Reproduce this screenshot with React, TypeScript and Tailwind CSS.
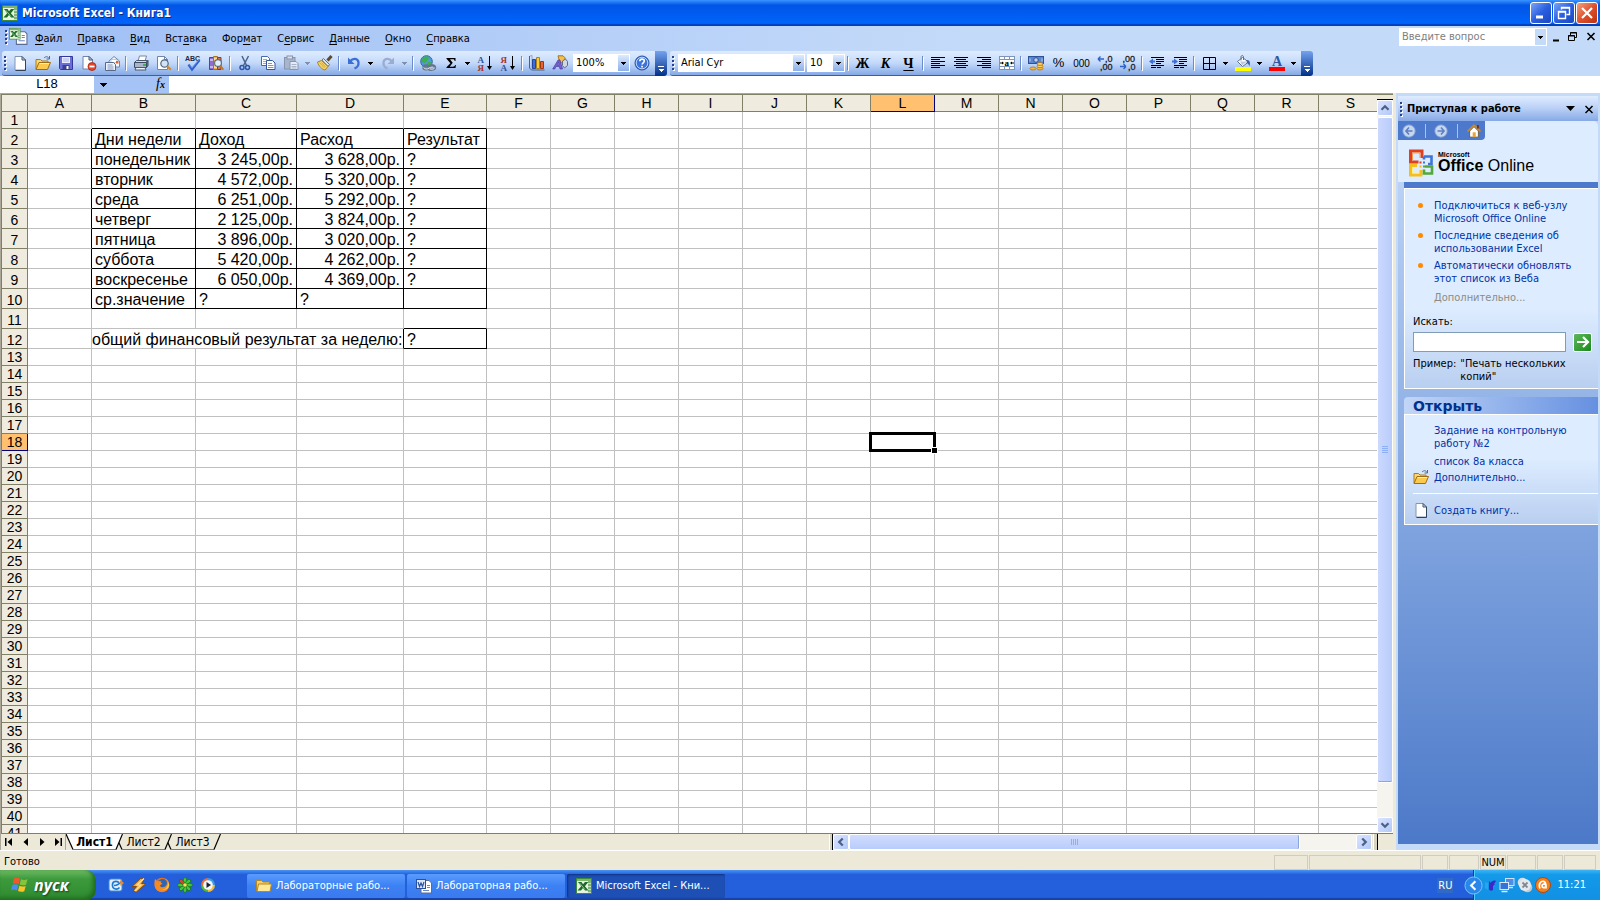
import React from "react";

const ui = "font-['DejaVu_Sans_Condensed','DejaVu_Sans',sans-serif]";

/* ---------- icons ---------- */

type SvgProps = { children: React.ReactNode; size?: string; box?: string };

function Svg({ children, size = "size-4", box = "0 0 16 16" }: SvgProps) {
  return (
    <svg viewBox={box} className={`${size} shrink-0`} fill="none" aria-hidden="true">
      {children}
    </svg>
  );
}

function Down({ color = "#000" }: { color?: string }) {
  return (
    <svg viewBox="0 0 5 3" className="h-[3px] w-[5px]" aria-hidden="true" shapeRendering="crispEdges">
      <path d="M0 0h5v1H4v1H3v1H2V2H1V1H0z" fill={color} />
    </svg>
  );
}

const Page = () => (
  <>
    <path d="M3 1.500h7l3.500 3.500v10H3z" fill="#fff" stroke="#8296b4" />
    <path d="M13.500 5v10.500H3.500" stroke="#33435c" />
    <path d="M10 1.500V5h3.500z" fill="#c9d6ea" stroke="#45566f" />
  </>
);

const FolderOpen = () => (
  <>
    <path d="M1 14V4.500h4.500l1.500 1.500h6V8" fill="#f7d774" stroke="#b07a1d" />
    <path d="M1 14.500l3-7h11.500l-3 7z" fill="#fbc94c" stroke="#a06c14" />
    <path d="M4.800 8.500h9.300" stroke="#fff2b5" />
    <path d="M9 3c2-2 4-1.500 5 .5M14.500 1v3h-3" stroke="#4b6a8c" />
  </>
);

const ExcelArt = () => (
  <>
    <rect x="0.500" y="0.500" width="15" height="15" fill="#e8f4e0" stroke="#3c8a3c" />
    <path d="M12 1h3v14h-3z" fill="#c3dfb9" />
    <path d="M12 4h3M12 7h3M12 10h3M12 13h3" stroke="#3c8a3c" />
    <path d="M1 1h14v2H1z" fill="#7db46e" />
    <path d="M2 4h3.500l1.500 2.300L9 4h3.300L8.900 8.200 12.500 12.500H9L7 10l-2 2.500H1.500l3.700-4.300z" fill="#1d6b2a" />
    <path d="M3.500 5l5.500 6.500" stroke="#8cc48a" />
  </>
);

const icons = {
  page: <Page />,
  open: <FolderOpen />,
  save: (
    <>
      <path d="M1.500 1.500h13v13h-12l-1-1z" fill="#6a6fd8" stroke="#34389c" />
      <rect x="4" y="2" width="8" height="6" fill="#e9edff" />
      <path d="M5 4h6M5 6h6" stroke="#a9b2e6" />
      <rect x="4.500" y="10" width="7" height="4.500" fill="#3b3f8f" />
      <rect x="8.500" y="11" width="2" height="3" fill="#fff" />
    </>
  ),
  permission: (
    <>
      <path d="M2 1.500h6l3.500 3.500v9H2z" fill="#fff" stroke="#6f84a8" />
      <path d="M8 1.500V5h3.500z" fill="#c9d6ea" stroke="#45566f" />
      <circle cx="11" cy="11.500" r="4" fill="#e2492c" stroke="#a32413" strokeWidth="0.800" />
      <path d="M8.500 11.500h5" stroke="#fff" strokeWidth="1.800" />
    </>
  ),
  email: (
    <>
      <path d="M5 6l5-4.500L15.500 6v6H5z" fill="#f3f6fb" stroke="#7287a8" />
      <path d="M7 4.500h6v3H7z" fill="#fff" stroke="#9aabc6" strokeWidth="0.600" />
      <rect x="12" y="6" width="2.500" height="2.500" fill="#e2632c" />
      <path d="M1.500 7.500h8l2 2v6h-10z" fill="#eef3fb" stroke="#55698b" />
      <path d="M3.500 10h5M3.500 12h6M3.500 14h6" stroke="#8195b6" />
    </>
  ),
  print: (
    <>
      <path d="M5 6l1.500-5h7L12 6z" fill="#fff" stroke="#7488a6" />
      <path d="M1.500 7.500l2-2h11l-1.500 2z" fill="#d5dce8" stroke="#4c5a70" />
      <path d="M1.500 7.500h12v5h-12z" fill="#a9b6ca" stroke="#3d4b60" />
      <path d="M13.500 7.500l1.500-2v5l-1.500 2z" fill="#6e7f99" stroke="#3d4b60" />
      <path d="M3 12.500h9l1 2.500H2z" fill="#eef2f8" stroke="#4c5a70" />
      <rect x="10" y="9" width="3" height="2" fill="#36b84a" />
    </>
  ),
  preview: (
    <>
      <path d="M1.500 1.500h7l3 3v10h-10z" fill="#fff" stroke="#6f84a8" />
      <path d="M8.500 1.500v3h3" stroke="#6f84a8" />
      <circle cx="8.500" cy="8.500" r="3.700" fill="#cfe5f7" stroke="#54677f" strokeWidth="1.200" />
      <path d="M11.200 11.200l3.600 3.600" stroke="#d28a2b" strokeWidth="2.200" />
    </>
  ),
  spell: (
    <>
      <text x="0" y="6" fontSize="7" fontWeight="700" fill="#1b2a4d" fontFamily="Liberation Sans">
        ABC
      </text>
      <path d="M3.500 9.500l3.500 5L14.500 5" stroke="#2f62cf" strokeWidth="2.400" />
      <path d="M4.500 9.500l2.500 3.300L13.500 5.200" stroke="#7fa8f2" strokeWidth="0.800" />
    </>
  ),
  research: (
    <>
      <path d="M1.500 2.500h4v12h-4z" fill="#8e6fd0" stroke="#5b3f9c" />
      <path d="M5.500 1.500h4v13h-4z" fill="#f0b84a" stroke="#a8741b" />
      <path d="M9.500 2.500h3.500v12H9.500z" fill="#d8705a" stroke="#8f3a2a" />
      <path d="M2 5h3M6 4h3M6 12h3M2 12h3" stroke="#fff" />
      <circle cx="10" cy="8" r="3.400" fill="#e2f0fb" stroke="#5a6b80" strokeWidth="1.100" />
      <path d="M12.300 10.500l3 4.300" stroke="#c07c20" strokeWidth="2" />
    </>
  ),
  cut: (
    <>
      <path d="M11.500 1L6.500 10.500M5 1l4.500 9.500" stroke="#4a648c" strokeWidth="1.500" />
      <circle cx="5" cy="12.500" r="2" stroke="#2c55a8" strokeWidth="1.500" />
      <circle cx="10.500" cy="12.500" r="2" stroke="#2c55a8" strokeWidth="1.500" />
    </>
  ),
  copy: (
    <>
      <path d="M1.500 1.500h6l2 2v7h-8z" fill="#fff" stroke="#4669b0" />
      <path d="M3 4.500h4M3 6.500h5M3 8.500h5" stroke="#8fabdd" />
      <path d="M6.500 5.500h6l2.500 2.500v6.500H6.500z" fill="#fff" stroke="#33569e" />
      <path d="M8 8.500h4M8 10.500h5.500M8 12.500h5.500" stroke="#7695d2" />
    </>
  ),
  paste: (
    <>
      <rect x="1.500" y="2.500" width="10.500" height="11.500" fill="#a8b6cd" stroke="#8794ad" />
      <rect x="4" y="1" width="5.500" height="3" fill="#d9e0ec" stroke="#8794ad" />
      <path d="M7 6.500h6l2 2v6H7z" fill="#e6ecf6" stroke="#8794ad" />
      <path d="M8.500 9.500h5M8.500 11.500h5M8.500 13h5" stroke="#a7b3c8" />
    </>
  ),
  brush: (
    <>
      <path d="M14.500 1l-4 4.500" stroke="#5c4a2c" strokeWidth="3" />
      <path d="M6.500 3.500l6 6-1.500 2L4.800 5z" fill="#dfe4ea" stroke="#6a6f78" />
      <path d="M4.500 5.500l6.500 6-3 3.500C5 14.500 1.500 11 .500 7z" fill="#f5d56a" stroke="#a88322" />
      <path d="M2.500 7.500l5 5.500M4.500 7.500l4 4.500" stroke="#c99f33" strokeWidth="0.800" />
    </>
  ),
  undo: (
    <>
      <path d="M4 6.500c3-4 8-3.500 8.500 1 .3 3-1.500 5-4 6" stroke="#3c6fd6" strokeWidth="2.300" />
      <path d="M2 2.500v6.500h6.500z" fill="#3c6fd6" />
    </>
  ),
  redo: (
    <>
      <path d="M12 6.500c-3-4-8-3.500-8.500 1-.3 3 1.500 5 4 6" stroke="#9aacd0" strokeWidth="2.300" />
      <path d="M14 2.500v6.500H7.500z" fill="#9aacd0" />
    </>
  ),
  link: (
    <>
      <circle cx="6.500" cy="6.500" r="5.800" fill="#4f9be0" stroke="#2c6a9e" />
      <path d="M3 2.500c2-1.500 5-1 6 .5-.5 2-2 1.500-2.500 3.500S3 8 1.500 6.500zM8 7c2-.5 3 .5 3.500 1.500-1 2-2 3-4 3.500C6.500 10 7 8 8 7z" fill="#3fb04a" />
      <path d="M3.500 12.500c0-2.500 4.500-2.500 5.500-1M8.500 13.800c1.500 1.500 6.500 1 6.500-1.300s-3.500-3-5.500-1.500" stroke="#66768a" strokeWidth="2.400" />
      <path d="M3.500 12.500c0 2.200 4.500 2.500 6 .5" stroke="#66768a" strokeWidth="2.400" />
      <path d="M3.800 12.500c0 1.800 4 2 5.500.5M9.500 13.800c2 1 5.200.3 5.200-1.300" stroke="#dfe5ec" strokeWidth="1" />
    </>
  ),
  sigma: (
    <path d="M3.500 3h9v3h-.800c-.3-1.300-.8-1.700-2-1.700H7l2.700 3.500-3 3.900h3.200c1.400 0 1.900-.6 2.200-1.700h.800l-.4 3H3.500v-.700L7.400 8.200 3.500 3.700z" fill="#000" />
  ),
  sortAz: (
    <>
      <text x="0.500" y="7.500" fontSize="9" fontWeight="700" fill="#2f549c" fontFamily="Liberation Serif">А</text>
      <text x="0.500" y="15.500" fontSize="9" fontWeight="700" fill="#a8322a" fontFamily="Liberation Serif">Я</text>
      <path d="M12.500 1v12" stroke="#000" />
      <path d="M10 11h5l-2.500 4z" fill="#000" />
    </>
  ),
  sortZa: (
    <>
      <text x="0.500" y="7.500" fontSize="9" fontWeight="700" fill="#a8322a" fontFamily="Liberation Serif">Я</text>
      <text x="0.500" y="15.500" fontSize="9" fontWeight="700" fill="#2f549c" fontFamily="Liberation Serif">А</text>
      <path d="M12.500 1v12" stroke="#000" />
      <path d="M10 11h5l-2.500 4z" fill="#000" />
    </>
  ),
  chart: (
    <>
      <path d="M.500 1v12l2 2h13" stroke="#46618f" />
      <path d="M1 1l2-.5v12" stroke="#8ea6cf" />
      <path d="M3.500 4.500h3v9h-3z" fill="#3e6fd9" stroke="#23479b" />
      <path d="M7.500 2.500h3v11h-3z" fill="#f7cf3c" stroke="#b0801b" />
      <path d="M11.500 6.500h3v7h-3z" fill="#e8632f" stroke="#a0350f" />
    </>
  ),
  drawing: (
    <>
      <path d="M6 .800h5l2 2v5H8z" fill="#f3c04a" stroke="#a9771b" />
      <path d="M10.500 6l3-2 2 2.500v4L12.500 13l-2-2.500z" fill="#cfd8e6" stroke="#5d6d88" />
      <path d="M.700 14L6 5h2l2.500 9H8l-.7-2.500H4L2.800 14zM5 10h2l-.5-2.800z" fill="#7a5fd0" stroke="#46309a" strokeWidth="0.600" />
    </>
  ),
  help: (
    <>
      <circle cx="8" cy="8" r="7" fill="#3c74dc" stroke="#27509e" />
      <circle cx="8" cy="8" r="5.800" stroke="#cfe0ff" strokeWidth="0.900" />
      <path d="M5.800 6.300c0-3 4.500-2.800 4.500-.2 0 1.700-2.200 1.700-2.200 3.400" stroke="#fff" strokeWidth="1.600" />
      <rect x="7.200" y="10.800" width="1.700" height="1.600" fill="#fff" />
    </>
  ),
  left: <path d="M1 2.500h14M1 4.500h9M1 6.500h14M1 8.500h9M1 10.500h14M1 12.500h9" stroke="#000" />,
  center: <path d="M1 2.500h14M3 4.500h10M1 6.500h14M3 8.500h10M1 10.500h14M3 12.500h10" stroke="#000" />,
  right: <path d="M1 2.500h14M6 4.500h9M1 6.500h14M6 8.500h9M1 10.500h14M6 12.500h9" stroke="#000" />,
  merge: (
    <>
      <rect x="0.500" y="1.500" width="15" height="13" fill="#fff" stroke="#7d95bd" />
      <path d="M0 4.500h16M0 11.500h16M5.500 1v3.500M10.500 1v3.500M5.500 11.500V15M10.500 11.500V15" stroke="#7d95bd" />
      <text x="5.500" y="10.500" fontSize="9" fontWeight="700" fill="#000" fontFamily="Liberation Serif">a</text>
      <path d="M1 8h3M12 8h3" stroke="#000" />
      <path d="M3 6.500L5 8 3 9.500zM13 6.500L11 8l2 1.500z" fill="#000" />
    </>
  ),
  currency: (
    <>
      <rect x="0.500" y="1.500" width="15" height="7" fill="#5b86cf" stroke="#2c5299" />
      <circle cx="8" cy="5" r="2.300" fill="#b9cff2" stroke="#2c5299" />
      <path d="M2 3.500v3M14 3.500v3" stroke="#b9cff2" />
      <ellipse cx="12" cy="13.500" rx="3" ry="1.500" fill="#f6b93b" stroke="#a76c10" strokeWidth="0.700" />
      <ellipse cx="12" cy="11.200" rx="3" ry="1.500" fill="#fbd062" stroke="#a76c10" strokeWidth="0.700" />
      <ellipse cx="12" cy="8.900" rx="3" ry="1.500" fill="#fbd062" stroke="#a76c10" strokeWidth="0.700" />
      <ellipse cx="5" cy="13.500" rx="3" ry="1.500" fill="#f6b93b" stroke="#a76c10" strokeWidth="0.700" />
    </>
  ),
  incDec: (
    <>
      <path d="M1 4h6M1 4l2.500-2.500M1 4l2.500 2.500" stroke="#2f62c8" strokeWidth="1.400" />
      <text x="8" y="7" fontSize="9" fill="#222" stroke="#222" strokeWidth="0.300" fontFamily="Liberation Sans">,0</text>
      <text x="3" y="15" fontSize="9" fill="#222" stroke="#222" strokeWidth="0.300" fontFamily="Liberation Sans">,00</text>
    </>
  ),
  decDec: (
    <>
      <text x="2.500" y="7" fontSize="9" fill="#222" stroke="#222" strokeWidth="0.300" fontFamily="Liberation Sans">,00</text>
      <path d="M0 11.500h6M6 11.500L3.500 9M6 11.500L3.500 14" stroke="#2f62c8" strokeWidth="1.400" />
      <text x="8" y="15" fontSize="9" fill="#222" stroke="#222" strokeWidth="0.300" fontFamily="Liberation Sans">,0</text>
    </>
  ),
  outdent: (
    <>
      <path d="M2 2.500h13M7 4.500h8M7 6.500h8M7 8.500h5M2 10.500h13M2 12.500h5M8 12.500h4" stroke="#000" />
      <path d="M4 3.500L0 6.500l4 3v-2h2v-2H4z" fill="#3c6fd6" />
    </>
  ),
  indent: (
    <>
      <path d="M2 2.500h13M7 4.500h8M7 6.500h8M7 8.500h5M2 10.500h13M2 12.500h5M8 12.500h4" stroke="#000" />
      <path d="M2 3.500l4 3-4 3v-2H0v-2h2z" fill="#3c6fd6" />
    </>
  ),
  borders: <path d="M2.500 2.500h12v12h-12zM8.500 2.500v12M2.500 8.500h12" stroke="#000" />,
  fill: (
    <>
      <path d="M2.500 6.500l5-4 6 4.500-6 4.500z" fill="#fff" stroke="#5f6f89" />
      <path d="M5 6.500h7l-5 4z" fill="#b9cbe6" />
      <path d="M6 5.500V2c0-2 2.500-2 2.500 0v3" stroke="#5f6f89" />
      <path d="M12 5c3 0 3.500 3 2.500 6-1-2-2-3-3-3.500z" fill="#3a5fae" />
      <path d="M0 12h16v4H0z" fill="#ff0" />
    </>
  ),
  fontColor: (
    <>
      <text x="3" y="11" fontSize="14" fontWeight="700" fill="#33579f" fontFamily="Liberation Serif">A</text>
      <path d="M0 12h16v4H0z" fill="#f00" />
    </>
  ),
};

type IconName = keyof typeof icons;

/* ---------- toolbar parts ---------- */

function Tool({ icon, label }: { icon: IconName; label: string }) {
  return (
    <button type="button" aria-label={label} className="flex h-6 w-[23px] shrink-0 items-center justify-center">
      <svg viewBox="0 0 16 16" className="size-4 shrink-0 overflow-visible" fill="none" aria-hidden="true">
        {icons[icon]}
      </svg>
    </button>
  );
}

function TextTool({ children, label }: { children: React.ReactNode; label: string }) {
  return (
    <button type="button" aria-label={label} className="flex h-6 w-[23px] shrink-0 items-center justify-center">
      {children}
    </button>
  );
}

function DropTool({ label, color }: { label: string; color?: string }) {
  return (
    <button type="button" aria-label={label} className="flex h-6 w-[11px] shrink-0 items-center justify-center">
      <Down color={color} />
    </button>
  );
}

function Sep() {
  return (
    <span className="flex w-[6px] shrink-0 justify-center">
      <span className="h-[14px] w-px bg-[#6a8ccb]" />
      <span className="mt-px h-[14px] w-px bg-white" />
    </span>
  );
}

function Grip() {
  return (
    <span className="flex w-[6px] shrink-0 flex-col items-center gap-[2px]">
      {[0, 1, 2, 3].map((i) => (
        <span key={i} className="size-[2px] bg-[#27418f] shadow-[1px_1px_0_#fff]" />
      ))}
    </span>
  );
}

function Combo({ label, value, width }: { label: string; value: string; width: string }) {
  return (
    <span className={`${width} ml-[2px] flex h-[18px] shrink-0 border border-white bg-white`}>
      <select aria-label={label} defaultValue={value} className={`${ui} min-w-0 flex-1 appearance-none bg-white pl-[2px] text-[11px] leading-4 outline-none`}>
        <option>{value}</option>
      </select>
      <span className="flex w-[11px] items-center justify-center bg-linear-to-b from-[#dcebff] to-[#8db0ea]">
        <Down />
      </span>
    </span>
  );
}

function Overflow() {
  return (
    <button type="button" aria-label="Параметры панели инструментов" className="flex h-[25px] w-3 shrink-0 flex-col items-center justify-end gap-[2px] rounded-r-[3px] bg-linear-to-b from-[#75a3ee] to-[#002f8a] pb-1">
      <span className="h-px w-[6px] bg-white" />
      <Down color="#fff" />
    </button>
  );
}

const bar = "flex h-[25px] shrink-0 items-center rounded-l-[3px] border-b border-[#3b619c] bg-linear-to-b from-[#dfecff] via-[#c3d9fa] to-[#86a9e6] pr-[2px]";

/* ---------- sheet data ---------- */

const columns: { name: string; width: string }[] = [
  { name: "A", width: "w-16" },
  { name: "B", width: "w-[104px]" },
  { name: "C", width: "w-[101px]" },
  { name: "D", width: "w-[107px]" },
  { name: "E", width: "w-[83px]" },
  ..."FGHIJKLMNOPQRS".split("").map((name) => ({ name, width: "w-16" })),
];

const rows = Array.from({ length: 41 }, (_, i) => i + 1);

const data: Record<number, string[]> = {
  2: ["Дни недели", "Доход", "Расход", "Результат"],
  3: ["понедельник", "3 245,00р.", "3 628,00р.", "?"],
  4: ["вторник", "4 572,00р.", "5 320,00р.", "?"],
  5: ["среда", "6 251,00р.", "5 292,00р.", "?"],
  6: ["четверг", "2 125,00р.", "3 824,00р.", "?"],
  7: ["пятница", "3 896,00р.", "3 020,00р.", "?"],
  8: ["суббота", "5 420,00р.", "4 262,00р.", "?"],
  9: ["воскресенье", "6 050,00р.", "4 369,00р.", "?"],
  10: ["ср.значение", "?", "?", ""],
};

function Cell({ row, col }: { row: number; col: number }) {
  const text = data[row]?.[col - 1] ?? (row === 12 && col === 4 ? "?" : "");
  const inTable = row >= 2 && row <= 10;
  const right = (inTable && col <= 4) || (row === 12 && col === 4);
  const bottom =
    (row >= 1 && row <= 10 && col >= 1 && col <= 4) || ((row === 11 || row === 12) && col === 4);
  const money = text.endsWith("р.");
  return (
    <td
      className={`relative overflow-visible border-r border-b px-[3px] pt-[2px] whitespace-nowrap ${right ? "border-r-black" : "border-r-[#c0c0c0]"} ${bottom ? "border-b-black" : "border-b-[#c0c0c0]"} ${money ? "text-right" : "text-left"}`}
    >
      {text}
      {row === 18 && col === 11 && (
        <span className="absolute -inset-[2px] z-10 border-[3px] border-black">
          <span className="absolute -right-[5px] -bottom-[5px] size-[7px] border border-white bg-black" />
        </span>
      )}
    </td>
  );
}

function Sheet() {
  return (
    <table className="w-[1381px] table-fixed border-separate border-spacing-0 font-['Liberation_Sans',Arial,sans-serif] text-[16px] leading-[17px] text-black">
      <colgroup>
        <col className="w-[26px]" />
        {columns.map((c) => (
          <col key={c.name} className={c.width} />
        ))}
      </colgroup>
      <thead>
        <tr className="h-[17px] text-[14px] leading-4">
          <th className="h-[17px] border-r border-b border-[#808066] bg-[#efebde] p-0" />
          {columns.map((c) => (
            <th
              key={c.name}
              scope="col"
              className={`h-[17px] border-r border-b p-0 text-center font-normal ${c.name === "L" ? "border-[#000080] bg-[#ffc06f]" : "border-[#808066] bg-[#efebde]"}`}
            >
              {c.name}
            </th>
          ))}
        </tr>
      </thead>
      <tbody>
        {rows.map((r) => {
          const tall = r >= 2 && r <= 12;
          return (
            <tr key={r} className={tall ? "h-5" : "h-[17px]"}>
              <th
                scope="row"
                className={`border-r border-b p-0 text-center align-bottom text-[14px] leading-4 font-normal ${r === 18 ? "border-[#000080] bg-[#ffc06f]" : "border-[#808066] bg-[#efebde]"}`}
              >
                {r}
              </th>
              {r === 12 ? (
                <>
                  <Cell row={12} col={0} />
                  <td colSpan={3} className="border-r border-b border-r-black border-b-[#c0c0c0] pt-[2px] pr-[3px] text-right whitespace-nowrap">
                    общий финансовый результат за неделю:
                  </td>
                  {columns.slice(4).map((c, i) => (
                    <Cell key={c.name} row={12} col={i + 4} />
                  ))}
                </>
              ) : (
                columns.map((c, i) => <Cell key={c.name} row={r} col={i} />)
              )}
            </tr>
          );
        })}
      </tbody>
    </table>
  );
}

/* ---------- scroll bars ---------- */

const chevrons = {
  up: "M4 10l4-4 4 4",
  down: "M4 6l4 4 4-4",
  left: "M10 4L6 8l4 4",
  right: "M6 4l4 4-4 4",
};

function ScrollButton({ dir, label }: { dir: keyof typeof chevrons; label: string }) {
  return (
    <button type="button" aria-label={label} className="flex size-4 shrink-0 items-center justify-center rounded-[2px] border border-white bg-linear-to-br from-[#dbe5ff] to-[#b2c8f8]">
      <Svg size="size-[14px]">
        <path d={chevrons[dir]} stroke="#4d6185" strokeWidth="2.600" />
      </Svg>
    </button>
  );
}

/* ---------- menu ---------- */

const menus: [string, string, string][] = [
  ["", "Ф", "айл"],
  ["", "П", "равка"],
  ["", "В", "ид"],
  ["Вст", "а", "вка"],
  ["Фор", "м", "ат"],
  ["С", "е", "рвис"],
  ["", "Д", "анные"],
  ["", "О", "кно"],
  ["", "С", "правка"],
];

function TitleBar() {
  const btn = "flex size-[22px] items-center justify-center rounded-[3px] border border-white";
  return (
    <header className="flex h-[26px] shrink-0 items-center bg-linear-to-b from-[#3a93ff] via-[#0055e5] via-20% to-[#0066ff] pr-[2px] pl-[2px] shadow-[inset_0_-2px_1px_#0040bb]">
      <Svg>
        <ExcelArt />
      </Svg>
      <h1 className="ml-1 flex-1 font-['DejaVu_Sans_Condensed','DejaVu_Sans',sans-serif] text-[12px] font-bold text-white [text-shadow:1px_1px_0_#0a2b86]">
        Microsoft Excel - Книга1
      </h1>
      <div className="flex gap-px">
        <button type="button" aria-label="Свернуть" className={`${btn} bg-linear-to-br from-[#7ba2f5] via-[#2a5fe0] to-[#1b47c0]`}>
          <Svg>
            <path d="M3 10.500h7v3H3z" fill="#fff" />
          </Svg>
        </button>
        <button type="button" aria-label="Восстановить" className={`${btn} bg-linear-to-br from-[#7ba2f5] via-[#2a5fe0] to-[#1b47c0]`}>
          <Svg>
            <path d="M5.500 4.500v-2h8v7h-3M5 3h9M2.500 6.500h7v7h-7zM2 7h8" stroke="#fff" strokeWidth="1.400" />
          </Svg>
        </button>
        <button type="button" aria-label="Закрыть" className={`${btn} bg-linear-to-br from-[#f0a080] via-[#e0502c] to-[#b8330f]`}>
          <Svg>
            <path d="M3 3l10 10M13 3L3 13" stroke="#fff" strokeWidth="2.200" />
          </Svg>
        </button>
      </div>
    </header>
  );
}

function MenuBar() {
  return (
    <nav className="flex h-[25px] shrink-0 items-center pr-px pb-[3px] pl-[3px]" aria-label="Главное меню">
      <Grip />
      <Svg size="h-[18px] w-[19px]" box="0 0 18 17">
        <path d="M7 3.500h8l2 2v10H7z" fill="#fff" stroke="#5a6c92" />
        <path d="M12 7h3M12 9h3M9 12h6" stroke="#6b87c4" />
        <g transform="scale(0.680)">
          <ExcelArt />
        </g>
      </Svg>
      <ul className="flex flex-1 gap-px">
        {menus.map(([a, u, b]) => (
          <li key={a + u + b}>
            <button type="button" className="px-[7px] text-[11px] leading-5">
              {a}
              <span className="underline underline-offset-2">{u}</span>
              {b}
            </button>
          </li>
        ))}
      </ul>
      <div className="flex h-[18px] w-[148px] border border-white bg-white">
        <input aria-label="Введите вопрос" placeholder="Введите вопрос" className="min-w-0 flex-1 bg-white pl-[2px] text-[11px] outline-none placeholder:text-[#808080]" />
        <span className="flex w-[11px] items-center justify-center bg-[#c4daf9]">
          <Down />
        </span>
      </div>
      <div className="flex items-center pl-[2px]">
        <button type="button" aria-label="Свернуть окно">
          <Svg>
            <path d="M4 10.500h6v2H4z" fill="#000" />
          </Svg>
        </button>
        <button type="button" aria-label="Восстановить окно">
          <Svg>
            <path d="M5.500 6V3.500h6v5H10M5 4h7M3.500 6.500h6v5h-6zM3 7h7" stroke="#000" />
          </Svg>
        </button>
        <button type="button" aria-label="Закрыть окно" className="pl-[2px]">
          <Svg>
            <path d="M4.500 4l7 7M11.500 4l-7 7" stroke="#000" strokeWidth="1.600" />
          </Svg>
        </button>
      </div>
    </nav>
  );
}

function Toolbars() {
  return (
    <div className="flex h-[25px] shrink-0 items-start gap-[3px] overflow-hidden pl-[2px]">
      <div className="flex">
        <div className={bar} role="toolbar" aria-label="Стандартная">
          <Grip />
          <Tool icon="page" label="Создать" />
          <Tool icon="open" label="Открыть" />
          <Tool icon="save" label="Сохранить" />
          <Tool icon="permission" label="Разрешения" />
          <Tool icon="email" label="Сообщение" />
          <Sep />
          <Tool icon="print" label="Печать" />
          <Tool icon="preview" label="Предварительный просмотр" />
          <Sep />
          <Tool icon="spell" label="Орфография" />
          <Tool icon="research" label="Справочные материалы" />
          <Sep />
          <Tool icon="cut" label="Вырезать" />
          <Tool icon="copy" label="Копировать" />
          <Tool icon="paste" label="Вставить" />
          <DropTool label="Варианты вставки" color="#7f8fae" />
          <Tool icon="brush" label="Формат по образцу" />
          <Sep />
          <Tool icon="undo" label="Отменить" />
          <DropTool label="Список отмены" />
          <Tool icon="redo" label="Вернуть" />
          <DropTool label="Список возврата" color="#7f8fae" />
          <Sep />
          <Tool icon="link" label="Гиперссылка" />
          <Tool icon="sigma" label="Автосумма" />
          <DropTool label="Функции автосуммы" />
          <Tool icon="sortAz" label="По возрастанию" />
          <Tool icon="sortZa" label="По убыванию" />
          <Sep />
          <Tool icon="chart" label="Мастер диаграмм" />
          <Tool icon="drawing" label="Рисование" />
          <Combo label="Масштаб" value="100%" width="w-[57px]" />
          <Tool icon="help" label="Справка" />
        </div>
        <Overflow />
      </div>
      <div className="flex">
        <div className={bar} role="toolbar" aria-label="Форматирование">
          <Grip />
          <Combo label="Шрифт" value="Arial Cyr" width="w-[127px]" />
          <Combo label="Размер" value="10" width="w-[38px]" />
          <Sep />
          <TextTool label="Полужирный">
            <span className="font-['Liberation_Serif',serif] text-[14px] font-bold">Ж</span>
          </TextTool>
          <TextTool label="Курсив">
            <span className="font-['Liberation_Serif',serif] text-[14px] font-bold italic">К</span>
          </TextTool>
          <TextTool label="Подчеркнутый">
            <span className="font-['Liberation_Serif',serif] text-[14px] font-bold underline underline-offset-2">Ч</span>
          </TextTool>
          <Sep />
          <Tool icon="left" label="По левому краю" />
          <Tool icon="center" label="По центру" />
          <Tool icon="right" label="По правому краю" />
          <Tool icon="merge" label="Объединить и поместить в центре" />
          <Sep />
          <Tool icon="currency" label="Денежный формат" />
          <TextTool label="Процентный формат">
            <span className="font-['Liberation_Sans',sans-serif] text-[13px]">%</span>
          </TextTool>
          <TextTool label="Формат с разделителями">
            <span className="font-['Liberation_Sans_Narrow','Liberation_Sans',sans-serif] text-[10px]">000</span>
          </TextTool>
          <Tool icon="incDec" label="Увеличить разрядность" />
          <Tool icon="decDec" label="Уменьшить разрядность" />
          <Sep />
          <Tool icon="outdent" label="Уменьшить отступ" />
          <Tool icon="indent" label="Увеличить отступ" />
          <Sep />
          <Tool icon="borders" label="Границы" />
          <DropTool label="Виды границ" />
          <Tool icon="fill" label="Цвет заливки" />
          <DropTool label="Цвета заливки" />
          <Tool icon="fontColor" label="Цвет шрифта" />
          <DropTool label="Цвета шрифта" />
        </div>
        <Overflow />
      </div>
    </div>
  );
}

function FormulaBar() {
  return (
    <div className="flex h-[17px] shrink-0 bg-white pl-[2px]">
      <input
        aria-label="Имя ячейки"
        defaultValue="L18"
        className="h-4 w-[92px] bg-white pr-[2px] text-center font-['Liberation_Sans',Arial,sans-serif] text-[13px] leading-4 outline-none"
      />
      <div className="flex w-[75px] items-center bg-[#a6c3f6] pl-[6px]">
        <button type="button" aria-label="Список имен">
          <svg viewBox="0 0 7 4" className="h-1 w-[7px]" shapeRendering="crispEdges" aria-hidden="true">
            <path d="M0 0h7v1H6v1H5v1H4v1H3V3H2V2H1V1H0z" fill="#000" />
          </svg>
        </button>
        <button type="button" aria-label="Вставить функцию" className="ml-auto pr-1 font-['Liberation_Serif',serif] text-[14px] leading-4 italic">
          f<span className="text-[10px] font-bold">x</span>
        </button>
      </div>
      <input aria-label="Строка формул" className="min-w-0 flex-1 bg-white outline-none" />
    </div>
  );
}

function SheetTabs() {
  const navs: [string, string][] = [
    ["Первый лист", "M4 4h1.500v8H4zM11 4v8L6.500 8z"],
    ["Предыдущий лист", "M11 4v8L6.500 8z"],
    ["Следующий лист", "M7 4v8l4.500-4z"],
    ["Последний лист", "M6 4v8l4.500-4zM11.500 4H13v8h-1.500z"],
  ];
  const order = ["z-20 font-bold", "z-10", "z-0"];
  return (
    <div className="flex h-[17px] shrink-0 border-t border-[#808066] bg-[#ece9d8]">
      <div className="flex w-[59.5%] items-start">
        {navs.map(([label, d]) => (
          <button key={label} type="button" aria-label={label} className="h-4 w-4">
            <Svg>
              <path d={d} fill="#000" />
            </Svg>
          </button>
        ))}
        <div className="flex h-4 border-l border-[#aca899]" role="tablist">
          {["Лист1", "Лист2", "Лист3"].map((name, i) => (
            <button
              key={name}
              type="button"
              role="tab"
              aria-selected={i === 0}
              className={`relative h-4 w-[49px] font-['DejaVu_Sans_Condensed','DejaVu_Sans',sans-serif] text-[12px] leading-4 ${order[i]}`}
            >
              <svg viewBox="0 0 57 16" className="absolute top-0 left-0 h-4 w-[57px]" aria-hidden="true">
                <path d="M0 0l7 15.500h43L56.500 0" fill={i === 0 ? "#fff" : "#ece9d8"} />
                <path d="M0 0l7 15.500" fill="none" stroke="#000" strokeWidth="1.200" />
                <path d="M7 15.500h43" fill="none" stroke="#808066" />
                <path d="M50 15.500L56.500 0" fill="none" stroke="#000" strokeWidth="1.200" />
              </svg>
              <span className="relative pl-2">{name}</span>
            </button>
          ))}
        </div>
      </div>
      <div className="flex min-w-0 flex-1 items-start">
        <span className="h-4 w-[3px] border-l border-white bg-[#d6d2c2]" />
        <span className="h-4 w-px bg-black" />
        <ScrollButton dir="left" label="Прокрутить влево" />
        <div className="flex h-4 min-w-0 flex-1 bg-[#f5f4ee]">
          <div className="flex w-[89%] items-center justify-center gap-px rounded-[2px] border border-white bg-linear-to-b from-[#d0dcff] to-[#b9ccfa] shadow-[inset_-1px_0_0_#8aa5da]">
            {[0, 1, 2, 3].map((i) => (
              <span key={i} className="h-[6px] w-px bg-[#8cb0f8]" />
            ))}
          </div>
        </div>
        <ScrollButton dir="right" label="Прокрутить вправо" />
        <span className="ml-px h-4 w-[4px] border-l border-white bg-[#d6d2c2]" />
        <span className="h-4 w-px bg-black" />
        <span className="h-4 w-[15px] bg-[#ece9d8]" />
      </div>
    </div>
  );
}

function VerticalScroll() {
  return (
    <div className="flex w-4 shrink-0 flex-col bg-[#f5f4ee]">
      <span className="h-[5px] shrink-0 border-b border-black bg-[#ece9d8]" />
      <ScrollButton dir="up" label="Прокрутить вверх" />
      <div className="min-h-0 flex-1">
        <div className="mt-px flex h-[95%] flex-col items-center justify-center gap-px rounded-[2px] border border-white bg-linear-to-r from-[#ccd9ff] to-[#b9ccfa] shadow-[inset_0_-1px_0_#8aa5da]">
          {[0, 1, 2, 3].map((i) => (
            <span key={i} className="h-px w-[6px] bg-[#8cb0f8]" />
          ))}
        </div>
      </div>
      <ScrollButton dir="down" label="Прокрутить вниз" />
    </div>
  );
}

/* ---------- task pane ---------- */

function OfficeLogo() {
  return (
    <svg viewBox="0 0 26 28" className="h-7 w-[26px]" fill="none" aria-hidden="true">
      <path d="M10.500 13H2.500V2h11.500v7" stroke="#e0401c" strokeWidth="3" />
      <path d="M4.500 11V4h7.500v5" stroke="#f79a4c" strokeWidth="1" />
      <path d="M16 7.500h7.500V15H20M16 7.500v3" stroke="#3f74d8" strokeWidth="2.600" />
      <path d="M9 16.500H2.500V26H13v-5" stroke="#f8bf1c" strokeWidth="3" />
      <path d="M4.500 18.500V24h6.500" stroke="#fff08a" strokeWidth="1" />
      <path d="M17 17.500h7v7h-8v-4" stroke="#54a83a" strokeWidth="2.600" />
      <path d="M11.500 12.500h2v2h-2z" fill="#e0401c" />
      <path d="M15 12.500h2v2h-2z" fill="#3f74d8" />
      <path d="M11.500 16.500h2v2h-2z" fill="#f8bf1c" />
      <path d="M15 16.500h2v2h-2z" fill="#54a83a" />
    </svg>
  );
}

const linkStyle = "block text-[#0033a8]";

function TaskPane() {
  return (
    <aside className="flex w-[204px] shrink-0 flex-col border-x-2 border-t-[3px] border-b-[6px] border-[#c4daf9] text-[11px] leading-[13px]">
      <div className="flex h-[25px] shrink-0 items-center bg-linear-to-b from-[#dfecff] via-[#b9d0f6] to-[#86a9e6] pr-[3px]">
        <Grip />
        <h2 className="ml-[3px] flex-1 text-[11px] font-bold whitespace-nowrap">Приступая к работе</h2>
        <button type="button" aria-label="Другие области задач" className="px-2">
          <svg viewBox="0 0 9 5" className="h-[5px] w-[9px]" aria-hidden="true">
            <path d="M0 0h9L4.500 5z" fill="#000" />
          </svg>
        </button>
        <button type="button" aria-label="Закрыть область">
          <Svg size="size-3" box="0 0 12 12">
            <path d="M2.500 3l7 7M9.500 3l-7 7" stroke="#000" strokeWidth="1.500" />
          </Svg>
        </button>
      </div>
      <div className="flex-1 bg-linear-to-b from-[#c4daf9] to-[#4c79c8]">
        <div className="rounded-tr-[5px] bg-[#ddecff]">
          <div className="flex h-[19px] w-[87px] items-center justify-around rounded-br-[4px] bg-[#4c79cb]">
            {["M8 4L4.500 8 8 12M5 8h7", "M8 4l3.500 4L8 12M11 8H4"].map((d, i) => (
              <React.Fragment key={d}>
                <button type="button" aria-label={i === 0 ? "Назад" : "Вперед"}>
                  <Svg size="size-[14px]">
                    <circle cx="8" cy="8" r="7" fill="#c6d6ef" stroke="#8fa9d6" />
                    <path d={d} stroke="#5b7fc0" strokeWidth="1.800" />
                  </Svg>
                </button>
                <span className="h-[14px] w-px bg-[#a9c2ee]" />
              </React.Fragment>
            ))}
            <button type="button" aria-label="Домой">
              <Svg size="size-[14px]">
                <path d="M3 8v7h10V8L8 3z" fill="#fff" stroke="#6b5433" />
                <path d="M.500 8.500L8 1.500l7.500 7" stroke="#c58a2d" strokeWidth="2" />
                <rect x="6.500" y="9.500" width="3.500" height="5.500" fill="#e7a637" />
                <path d="M12.500 1v4" stroke="#7a2b17" strokeWidth="2" />
              </Svg>
            </button>
          </div>
          <div className="ml-[6px] flex h-[42px] items-center gap-1 pt-[3px] pl-1">
            <OfficeLogo />
            <p className="font-['Liberation_Sans',sans-serif] leading-none">
              <span className="block text-[7px] leading-[6px] font-bold">Microsoft</span>
              <span className="block text-[16px] leading-4 whitespace-nowrap">
                <b>Office</b> Online
              </span>
            </p>
          </div>
        </div>
        <div className="ml-[6px] h-[6px] bg-[#4c79cb]" />
        <section className="ml-[6px] border-t border-b border-l border-white bg-linear-to-b from-[#ddecff] from-60% to-[#b9cff0] pb-[5px] pl-2">
          <ul className="space-y-1 pt-[10px] pl-[21px]">
            {[
              ["Подключиться к веб-узлу", "Microsoft Office Online"],
              ["Последние сведения об", "использовании Excel"],
              ["Автоматически обновлять", "этот список из Веба"],
            ].map(([a, b]) => (
              <li key={a} className="relative whitespace-nowrap">
                <span className="absolute top-1 -left-4 size-[5px] rounded-full bg-[#ff8a00]" />
                <a href="#" className={linkStyle}>
                  {a}
                  <br />
                  {b}
                </a>
              </li>
            ))}
          </ul>
          <p className="pt-[6px] pl-[21px] text-[#8c8c84]">Дополнительно...</p>
          <label htmlFor="pane-search" className="block pt-[11px]">
            Искать:
          </label>
          <div className="flex items-center gap-[7px] pt-1 pr-[6px]">
            <input id="pane-search" className="h-5 min-w-0 flex-1 border border-[#7f9db9] bg-white px-1 outline-none" />
            <button type="button" aria-label="Найти" className="flex size-[19px] items-center justify-center rounded-[2px] border border-white bg-linear-to-br from-[#5cb85c] to-[#128a12]">
              <Svg>
                <path d="M2 8h11M8 3l5 5-5 5" stroke="#fff" strokeWidth="2.200" />
              </Svg>
            </button>
          </div>
          <p className="flex gap-1 pt-[5px]">
            <span>Пример:</span>
            <span className="whitespace-nowrap">
              "Печать нескольких
              <br />
              копий"
            </span>
          </p>
        </section>
        <section className="mt-2 ml-[6px]">
          <h3 className="h-[17px] rounded-tl-[4px] bg-linear-to-r from-[#c2d6f6] to-[#6690e0] pl-[9px] font-['DejaVu_Sans',sans-serif] text-[14px] leading-[18px] font-bold text-[#00318c]">
            Открыть
          </h3>
          <div className="border border-r-0 border-white bg-linear-to-b from-[#ddecff] from-40% to-[#b9cff0] pb-[6px] pl-2">
            <ul className="pt-[9px] pl-[21px] whitespace-nowrap">
              <li>
                <a href="#" className={linkStyle}>
                  Задание на контрольную
                  <br />
                  работу №2
                </a>
              </li>
              <li className="pt-[5px]">
                <a href="#" className={linkStyle}>
                  список 8а класса
                </a>
              </li>
            </ul>
            <a href="#" className={`${linkStyle} mt-px flex h-4 items-center gap-[5px]`}>
              <Svg>
                <FolderOpen />
              </Svg>
              Дополнительно...
            </a>
            <div className="my-2 h-px bg-white" />
            <a href="#" className={`${linkStyle} flex h-4 items-center gap-[5px]`}>
              <Svg>
                <Page />
              </Svg>
              Создать книгу...
            </a>
          </div>
        </section>
      </div>
    </aside>
  );
}

/* ---------- status bar and taskbar ---------- */

function StatusBar() {
  const box = "h-[15px] border border-[#d0ccc0]";
  return (
    <footer className="flex h-5 shrink-0 items-center border-t border-white bg-[#ece9d8] px-1 pt-1 text-[11px]">
      <span className="flex-1">Готово</span>
      <div className="flex gap-px">
        <span className={`${box} w-[34px]`} />
        <span className={`${box} w-28`} />
        <span className={`${box} w-[26px]`} />
        <span className={`${box} w-[30px]`} />
        <span className={`${box} w-[26px] text-center leading-[13px]`}>NUM</span>
        <span className={`${box} w-[29px]`} />
        <span className={`${box} w-[26px]`} />
        <span className={`${box} w-8`} />
      </div>
    </footer>
  );
}

function Taskbar() {
  const task = "flex h-6 w-[158px] items-center gap-1 rounded-[2px] px-[9px] text-[11px] text-white";
  return (
    <div className="flex h-[30px] shrink-0 items-stretch bg-linear-to-b from-[#4a94f4] via-[#245edb] via-15% to-[#235fdc] shadow-[inset_0_-2px_1px_#1941a5]">
      <button
        type="button"
        className="flex w-24 items-center gap-1 rounded-r-[10px] bg-linear-to-b from-[#6dbb63] via-[#3c9a3c] via-30% to-[#2f8a2f] pl-[10px] shadow-[inset_-3px_-2px_4px_#1f6a1f]"
      >
        <Svg size="size-5" box="0 0 20 20">
          <path d="M4 3.500c2-1 4-1 6 .2L8.700 9c-2-1.100-4-1-6-.2z" fill="#f2582c" />
          <path d="M11 4.200c2 1 4 1 6.500.1L16 9.700c-2 .8-4.300.8-6.300-.2z" fill="#86c440" />
          <path d="M2.300 10c2-1 4-1 6 .1L7 15.400c-2-1-4-1.100-6-.2z" fill="#4f8cf0" />
          <path d="M9.400 10.700c2 1 4 1.100 6.300.2l-1.400 5.300c-2 .8-4.300.7-6.300-.2z" fill="#fbc42a" />
        </Svg>
        <span className="font-['Open_Sans','Noto_Sans',sans-serif] text-[16px] leading-5 font-bold text-white italic [text-shadow:1px_1px_2px_#173f17]">
          пуск
        </span>
      </button>
      <div className="flex w-[151px] items-center gap-[7px] pl-3">
        <button type="button" aria-label="Outlook Express">
          <Svg>
            <rect x="1" y="2" width="13" height="12" rx="2" fill="#e3f0fb" stroke="#3b8bd0" />
            <path d="M11 5.500C7 3 4 5 4.500 9c.5 3.500 5 4 7 1.500M6 8.500c3 0 5-1 7.500-4" stroke="#1d78cf" strokeWidth="1.600" />
            <path d="M12 3l4 3-3.500 3z" fill="#f08a2a" />
          </Svg>
        </button>
        <button type="button" aria-label="Winamp">
          <Svg>
            <path d="M9.500 1.500L1 9.500h4.500L2 14l3.500 1L15 6.500h-4.500L13.500 2z" fill="#f6a72c" stroke="#83450a" strokeWidth="0.900" />
            <path d="M13 1.500l-7 6.500h4L4 14" stroke="#fbe3b0" strokeWidth="1.200" />
          </Svg>
        </button>
        <button type="button" aria-label="Firefox">
          <Svg>
            <circle cx="8" cy="8" r="7.300" fill="#e8701a" />
            <circle cx="8.500" cy="6.500" r="4.600" fill="#2e66b5" />
            <path d="M1 2l2.500 2.500C5 3.500 6 4 7.500 4.500 6.500 5.500 7 6 8.500 6.500 7.500 8 6 7.500 6 9c1.500 2 5 1.500 6.500-1C14 5.500 12.500 3 11 1.500c3.500 1 4.800 5 4 8-1.500 5-8 7-12 3.500C0 10.500 0 6 1 2z" fill="#f58a22" />
            <path d="M13.800 5c1 4-2 8-6 7.500C11 13.500 15 12 15 8c0-1-.5-2-1.200-3z" fill="#fbd24a" />
          </Svg>
        </button>
        <button type="button" aria-label="ICQ">
          <Svg>
            {[0, 45, 90, 135, 180, 225, 270, 315].map((a) => (
              <ellipse key={a} cx="8" cy="3.500" rx="1.800" ry="3" fill={a === 315 ? "#e8402a" : "#45c83a"} stroke="#176b1a" strokeWidth="0.700" transform={`rotate(${a} 8 8)`} />
            ))}
            <circle cx="8" cy="8" r="1.800" fill="#f8e34a" />
          </Svg>
        </button>
        <button type="button" aria-label="Проигрыватель Windows Media">
          <Svg>
            <path d="M8 1a7 7 0 0 1 7 7H8z" fill="#3f9be0" />
            <path d="M15 8a7 7 0 0 1-7 7V8z" fill="#f5c02a" />
            <path d="M8 15a7 7 0 0 1-7-7h7z" fill="#58b53c" />
            <path d="M1 8a7 7 0 0 1 7-7v7z" fill="#ef6a2c" />
            <circle cx="8" cy="8" r="4.800" fill="#f4f7fa" />
            <path d="M6.500 5v6l4.500-3z" fill="#1b2430" />
          </Svg>
        </button>
      </div>
      <div className="flex flex-1 items-center gap-[2px] pt-[2px]">
        <button type="button" className={`${task} bg-linear-to-b from-[#5a9bff] via-[#3c81f3] to-[#3a7bee]`}>
          <Svg>
            <path d="M.500 12.500v-10h5L7 4h6.500v9z" fill="#f5cf62" stroke="#b48724" />
            <path d="M2.500 6h13l-1.500 7.500H1z" fill="#ffe997" stroke="#b48724" />
          </Svg>
          Лабораторные рабо...
        </button>
        <button type="button" className={`${task} bg-linear-to-b from-[#5a9bff] via-[#3c81f3] to-[#3a7bee]`}>
          <Svg>
            <path d="M5 2.500h8l2.500 2.500v10H5z" fill="#fff" stroke="#5a6c92" />
            <path d="M7 12.500h6M11 7.500h3M11 9.500h3" stroke="#6b87c4" />
            <rect x="0.500" y="1.500" width="9" height="9" fill="#dbe7fb" stroke="#28509e" />
            <path d="M2 4l1.500 4.500L5 5l1.500 3.500L8 4" stroke="#28509e" strokeWidth="1.200" />
          </Svg>
          Лабораторная рабо...
        </button>
        <button type="button" aria-current="true" className={`${task} bg-[#1d4fb5] shadow-[inset_1px_1px_2px_#123280]`}>
          <Svg>
            <ExcelArt />
          </Svg>
          Microsoft Excel - Кни...
        </button>
      </div>
      <div className="flex items-center pr-5 text-[11px] text-white">
        <span className="bg-[#316ac5] px-px leading-[15px]">RU</span>
      </div>
      <div className="flex items-center border-l border-[#0b3f9c] bg-linear-to-b from-[#3bb4f6] via-[#139ae9] via-15% to-[#1290e4] pr-[14px] text-[11px] text-white shadow-[inset_1px_0_0_#4fd0ff]">
        <button type="button" aria-label="Показать скрытые значки" className="-ml-[10px]">
          <Svg size="size-[19px]" box="0 0 20 20">
            <circle cx="10" cy="10" r="9" fill="#2a86e8" stroke="#7fc6fb" />
            <path d="M12 5.500L7.500 10l4.500 4.500" stroke="#fff" strokeWidth="2.200" />
          </Svg>
        </button>
        <div className="flex items-center gap-[2px]">
          <Svg size="h-4 w-[14px]" box="0 0 14 16">
            <path d="M2 5l3 1v7l-3-2z" fill="#2aa4ef" />
            <path d="M6 5l1-1v2c2-2 4-3 6-2l-2 3h1l-2 2v4c-2 1-3 1-4-1z" fill="#3a28c8" />
          </Svg>
          <Svg>
            <rect x="6.500" y="1.500" width="8.500" height="7" fill="#4d8de8" stroke="#cfe0f8" />
            <path d="M8 10.500h6" stroke="#cfe0f8" strokeWidth="1.500" />
            <rect x="1" y="5.500" width="8.500" height="7" fill="#3474d8" stroke="#dbe8fb" />
            <path d="M2.500 14.500h6" stroke="#dbe8fb" strokeWidth="1.500" />
          </Svg>
          <Svg>
            <circle cx="5.500" cy="5.500" r="4.800" fill="#d9dde2" />
            <circle cx="10.500" cy="10.500" r="4.800" fill="#c3c9d0" />
            <circle cx="8" cy="8" r="6" fill="#e6e9ec" />
            <path d="M5.500 5.500l5 5M10.500 5.500l-5 5" stroke="#7f8891" strokeWidth="1.800" />
          </Svg>
          <Svg>
            <circle cx="8" cy="8" r="7.500" fill="#f3801c" stroke="#b5480a" />
            <path d="M5 11.500c-2-5 1-7.500 3.500-7.200C11.500 4.700 11 9 11 11.500M11 8c-1.500-1.500-4-1-4 1s3 2.300 4 .5" stroke="#fff" strokeWidth="1.700" />
          </Svg>
        </div>
        <time className="pl-[6px]">11:21</time>
      </div>
    </div>
  );
}

export default function App() {
  return (
    <div className={`${ui} flex h-screen flex-col overflow-hidden bg-[#ece9d8] text-black`}>
      <TitleBar />
      <div className="shrink-0 bg-linear-to-r from-[#9ebef5] to-[#c4daf9] to-60%">
        <MenuBar />
        <Toolbars />
      </div>
      <FormulaBar />
      <div className="flex min-h-0 flex-1">
        <main className="flex min-w-0 flex-1 flex-col border-t border-l border-[#aca899]">
          <div className="flex min-h-0 flex-1 border-t border-l border-[#808066]">
            <div className="min-w-0 flex-1 overflow-hidden bg-white">
              <Sheet />
            </div>
            <VerticalScroll />
          </div>
          <SheetTabs />
        </main>
        <span className="w-[3px] bg-[#ece9d8]" />
        <TaskPane />
      </div>
      <StatusBar />
      <Taskbar />
    </div>
  );
}
